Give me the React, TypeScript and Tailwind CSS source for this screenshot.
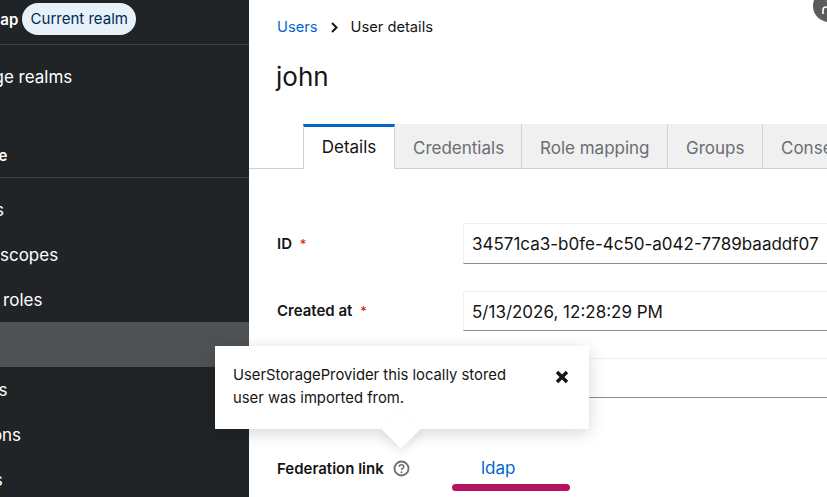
const navTop = ["Clients", "Client scopes", "Realm roles", "Users", "Groups", "Sessions", "Events"];
const tabs = [
  { label: "Details", width: "w-[92px]" },
  { label: "Credentials", width: "w-[127px]" },
  { label: "Role mapping", width: "w-[146px]" },
  { label: "Groups", width: "w-[95px]" },
  { label: "Consents", width: "w-[110px]" },
];

function Field({ label, value, height }: { label: string; value: string; height: string }) {
  return (
    <div className="flex items-center">
      <div className="w-[186px] shrink-0 pt-[1px] text-[15px] font-semibold text-[#151515]">
        {label} <span className="ml-1 text-[13px] font-normal text-[#c9190b]">*</span>
      </div>
      <div className={`flex w-[500px] shrink-0 items-center border border-[#f0f0f0] border-b-[#8a8d90] pl-2 pt-[3px] text-[17px] text-[#151515] ${height}`}>
        {value}
      </div>
    </div>
  );
}

export default function App() {
  return (
    <div className="relative flex h-[497px] w-[827px] overflow-hidden bg-white font-['Inter','Liberation_Sans',sans-serif]">
      {/* Sidebar, scrolled left like the page */}
      <aside className="h-full w-[249px] shrink-0 overflow-hidden bg-[#212427] text-[17px] text-white">
        <div className="-ml-[75px] w-[324px]">
          <div className="flex h-[45px] items-start border-b border-[#3c3f42] pl-[62px] pt-[3px]">
            <span className="mt-[6px] text-[15px] font-semibold text-white">ldap</span>
            <span className="ml-1 flex h-[32px] w-[114px] shrink-0 items-center justify-center rounded-full bg-[#e7f1fa] pt-[1px] text-[15px] text-[#002952]">
              Current realm
            </span>
          </div>
          <div className="flex h-[64px] items-center pl-6 pt-[2px]">Manage realms</div>
          <div className="h-[23px]" />
          <div className="flex h-[46px] items-center border-b border-[#3c3f42] pl-6 pt-[4px] text-[15px] font-semibold">Manage</div>
          <div className="pt-[9px]">
            {navTop.map((item) => (
              <div
                key={item}
                className={`flex h-[45px] items-center pl-6 pt-[3px] ${item === "Users" ? "bg-[#4f5255]" : ""}`}
              >
                {item}
              </div>
            ))}
          </div>
        </div>
      </aside>

      {/* Main content */}
      <main className="min-w-0 flex-1 overflow-hidden">
        <div className="flex items-center gap-3 pl-[28px] pt-[17px] text-[14.7px] leading-[20px]">
          <span className="text-[#0066cc]">Users</span>
          <svg width="9" height="11" viewBox="0 0 9 11" className="text-[#151515]">
            <path d="M2 1l4.5 4.5L2 10" fill="none" stroke="currentColor" strokeWidth="2" />
          </svg>
          <span className="text-[#151515]">User details</span>
        </div>
        <h1 className="pl-[27px] pt-[22px] text-[26px] leading-[36px] font-normal text-[#151515]">john</h1>

        <div className="mt-[29px] flex h-[45px] border-b border-[#d2d2d2] pl-[54px]">
          {tabs.map((tab, i) => (
            <div
              key={tab.label}
              className={
                i === 0
                  ? `flex h-[45px] shrink-0 items-center justify-center border-x border-[#d2d2d2] border-t-[3px] border-t-[#0066cc] bg-white text-[17px] text-[#151515] ${tab.width}`
                  : `flex h-[44px] shrink-0 items-center border-r border-[#d2d2d2] bg-[#f0f0f0] pl-[18px] pt-[5px] text-[17px] text-[#6a6e73] ${tab.width}`
              }
            >
              {tab.label}
            </div>
          ))}
        </div>

        <div className="pl-[28px] pt-[54px]">
          <Field label="ID" value="34571ca3-b0fe-4c50-a042-7789baaddf07" height="h-[41px]" />
          <div className="h-[27px]" />
          <Field label="Created at" value="5/13/2026, 12:28:29 PM" height="h-[40px]" />
          <div className="ml-[186px] mt-[27px] h-[40px] w-[500px] border border-[#f0f0f0] border-b-[#8a8d90]" />
          <div className="mt-[58px] flex items-center">
            <div className="flex w-[204px] shrink-0 items-center text-[15px] font-semibold text-[#151515]">
              Federation link
              <svg width="17" height="17" viewBox="0 0 16 16" className="ml-[9px] text-[#6a6e73]">
                <circle cx="8" cy="8" r="6.6" fill="none" stroke="currentColor" strokeWidth="1.7" />
                <path d="M5.9 6.4c0-1.2 1-1.9 2.1-1.9s2.1.7 2.1 1.8c0 1.6-2.1 1.6-2.1 3" fill="none" stroke="currentColor" strokeWidth="1.5" />
                <circle cx="8" cy="11.5" r="0.95" fill="currentColor" />
              </svg>
            </div>
            <span className="text-[17px] text-[#0066cc]">ldap</span>
          </div>
        </div>
      </main>

      {/* Badge cut off at the top right corner */}
      <div className="absolute -top-[10px] left-[813px] h-[32px] w-[32px] rounded-full bg-[#5a5c5e]">
        <svg width="32" height="32" viewBox="0 0 32 32" className="text-white">
          <path d="M10 24v-4a3 3 0 0 1 3-3h1M14 12l2-2 4 1" fill="none" stroke="currentColor" strokeWidth="1.6" />
        </svg>
      </div>

      {/* Popover */}
      <div className="absolute left-[215px] top-[346px] h-[83px] w-[374px] bg-white pl-[18px] pt-[18px] text-[14.8px] leading-[23px] text-[#151515] shadow-[0_4px_16px_rgba(3,3,3,0.16)]">
        <div className="relative z-10 w-[290px]">UserStorageProvider this locally stored user was imported from.</div>
        <svg width="14" height="14" viewBox="0 0 14 14" className="absolute left-[340px] top-[24px] z-10 text-[#151515]">
          <path d="M2 2l10 10M12 2L2 12" fill="none" stroke="currentColor" strokeWidth="3.4" />
        </svg>
        <div className="absolute left-[172px] top-[69px] h-[28px] w-[28px] rotate-45 bg-white shadow-[4px_4px_8px_rgba(3,3,3,0.08)]" />
      </div>

      {/* Underline annotation */}
      <div className="absolute left-[452px] top-[484px] h-[7px] w-[118px] rounded-full bg-[#b5135f]" />
    </div>
  );
}
